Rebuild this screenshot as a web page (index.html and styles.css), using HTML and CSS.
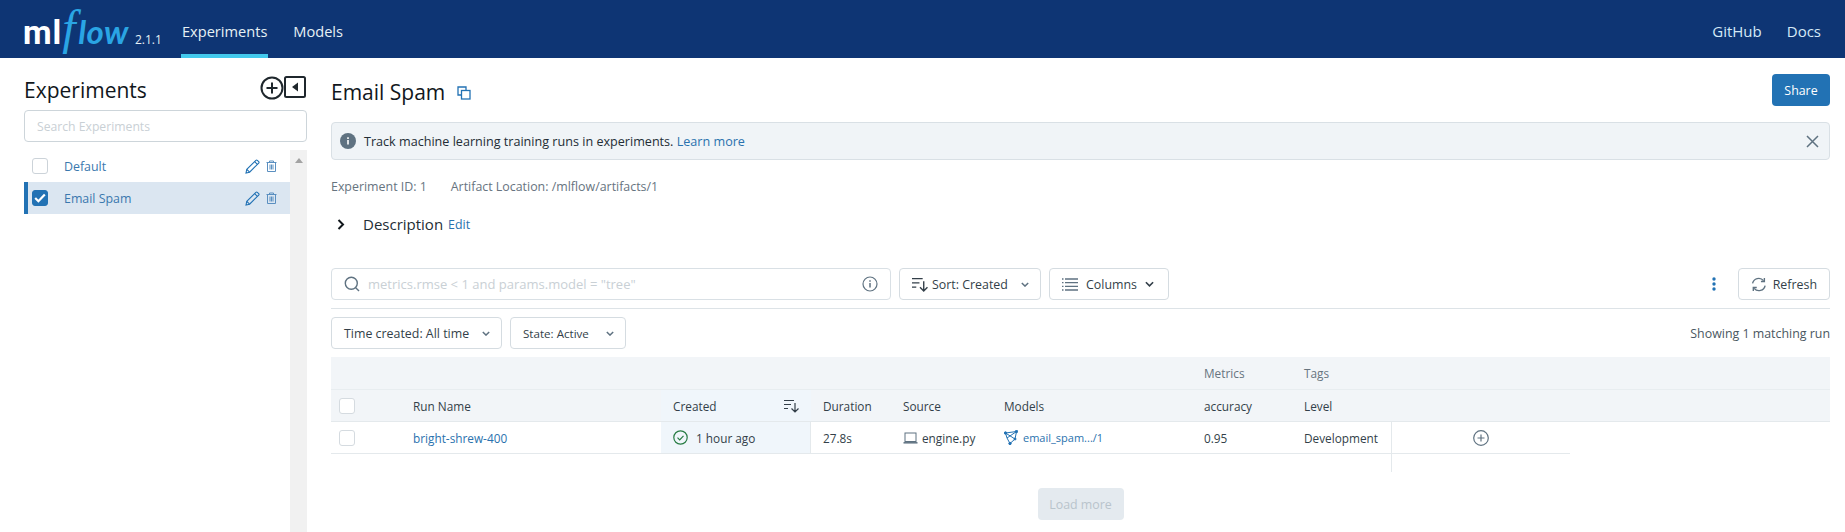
FILE: index.html
```html
<!DOCTYPE html>
<html lang="en">
<head>
<meta charset="utf-8">
<title>MLflow</title>
<link rel="stylesheet" href="styles.css">
</head>
<body>
<header class="topbar">
  <div class="brand"><span class="logo-ml">ml</span><span class="logo-flow"><span class="logo-f">f</span>low</span><span class="version">2.1.1</span></div>
  <nav class="nav">
    <a class="nav-item active">Experiments</a>
    <a class="nav-item">Models</a>
  </nav>
  <nav class="nav-right">
    <a class="nav-link">GitHub</a>
    <a class="nav-link">Docs</a>
  </nav>
</header>
<div class="page">
  <aside class="sidebar">
    <div class="side-head">
      <h2 class="side-title">Experiments</h2>
      <div class="side-tools">
        <svg width="24" height="24" viewBox="0 0 24 24" fill="none" stroke="#1f272d" stroke-width="2"><circle cx="12" cy="12" r="10.5"/><path d="M12 6.5v11M6.5 12h11"/></svg>
        <svg width="22" height="22" viewBox="0 0 22 22"><rect x="1" y="1" width="20" height="20" rx="1.5" fill="none" stroke="#1f272d" stroke-width="2"/><path d="M14 6.5v9L8 11z" fill="#1f272d"/></svg>
      </div>
    </div>
    <input class="side-search" placeholder="Search Experiments">
    <div class="side-body">
      <ul class="exp-list">
        <li class="exp-row">
          <span class="check"></span>
          <span class="exp-name">Default</span>
          <svg class="pencil" width="15" height="15" viewBox="0 0 15 15" fill="none" stroke="#2272b4" stroke-width="1.1"><path d="M1 14l.8-3.6L10.9 1.3a1 1 0 0 1 1.4 0l1.4 1.4a1 1 0 0 1 0 1.4L4.6 13.2z"/><path d="M9.6 2.6l2.8 2.8M1.8 10.4l2.8 2.8"/></svg>
          <svg class="trash" width="11" height="12" viewBox="0 0 11 12" fill="none" stroke="#5a8fc0"><path d="M.5 2.5h10M3.5 2.5V1h4v1.5M1.5 2.500v9h8v-9M4 4.500v5M5.500 4.500v5M7 4.500v5"/></svg>
        </li>
        <li class="exp-row selected">
          <span class="check checked"><svg width="12" height="10" viewBox="0 0 12 10" fill="none" stroke="#fff" stroke-width="2.2"><path d="M1.2 5l3.200 3.200 6.400-6.800"/></svg></span>
          <span class="exp-name">Email Spam</span>
          <svg class="pencil" width="15" height="15" viewBox="0 0 15 15" fill="none" stroke="#2272b4" stroke-width="1.1"><path d="M1 14l.8-3.6L10.9 1.3a1 1 0 0 1 1.4 0l1.4 1.4a1 1 0 0 1 0 1.4L4.6 13.2z"/><path d="M9.6 2.6l2.8 2.8M1.8 10.4l2.8 2.8"/></svg>
          <svg class="trash" width="11" height="12" viewBox="0 0 11 12" fill="none" stroke="#5a8fc0"><path d="M.5 2.5h10M3.5 2.5V1h4v1.5M1.5 2.500v9h8v-9M4 4.500v5M5.500 4.500v5M7 4.500v5"/></svg>
        </li>
      </ul>
      <div class="scrollbar"><span class="scroll-up"></span></div>
    </div>
  </aside>
  <main class="main">
    <div class="title-row">
      <h1 class="title">Email Spam</h1>
      <svg class="copy" width="14" height="14" viewBox="0 0 14 14" fill="none" stroke="#2272b4" stroke-width="1.3"><path d="M1 4V1h8v3M1 1v8h3"/><rect x="4.5" y="4.500" width="8.500" height="8.500"/></svg>
      <button class="share">Share</button>
    </div>
    <div class="alert">
      <svg width="16" height="16" viewBox="0 0 16 16"><circle cx="8" cy="8" r="8" fill="#5f7281"/><path d="M7.200 7h1.600v4.500H7.200zM7.200 4.300h1.600v1.600H7.200z" fill="#fff"/></svg>
      <span class="alert-text">Track machine learning training runs in experiments. <a class="link">Learn more</a></span>
      <svg class="alert-close" width="13" height="13" viewBox="0 0 13 13" stroke="#5f7281" stroke-width="1.5"><path d="M1 1l11 11M12 1L1 12"/></svg>
    </div>
    <div class="meta"><span>Experiment ID: 1</span><span>Artifact Location: /mlflow/artifacts/1</span></div>
    <div class="desc">
      <svg width="8" height="11" viewBox="0 0 8 11" fill="none" stroke="#11171c" stroke-width="2"><path d="M1.500 1l4.500 4.500L1.500 10"/></svg>
      <span class="desc-label">Description</span><a class="link desc-edit">Edit</a>
    </div>
    <div class="toolbar">
      <div class="search">
        <svg width="16" height="16" viewBox="0 0 16 16" fill="none" stroke="#5f7281" stroke-width="1.4"><circle cx="7.300" cy="7.300" r="6"/><path d="M11.700 11.700L15 15"/></svg>
        <span class="search-ph">metrics.rmse &lt; 1 and params.model = "tree"</span>
        <svg width="16" height="16" viewBox="0 0 16 16" fill="none" stroke="#5f7281" stroke-width="1.2"><circle cx="8" cy="8" r="7"/><path d="M8 7v4.500M8 4.300v1.500" stroke-width="1.5"/></svg>
      </div>
      <button class="btn sort">
        <svg width="16" height="15" viewBox="0 0 15 14" fill="none" stroke="#333f49" stroke-width="1.3"><path d="M0 1.500h10M0 5.500h7M0 9.500h4M11 4v9M7.500 9.500L11 13l3.500-3.500"/></svg>
        <span>Sort: Created</span>
        <svg class="chev" width="8" height="5" viewBox="0 0 10 6" fill="none" stroke="#5f7281" stroke-width="1.8"><path d="M1 1l4 4 4-4"/></svg>
      </button>
      <button class="btn columns">
        <svg width="16" height="13" viewBox="0 0 16 13" fill="none" stroke="#5f7281" stroke-width="1.3"><path d="M3 1h13M3 4.700h13M3 8.300h13M3 12h13M0 1h1.500M0 4.700h1.500M0 8.300h1.500M0 12h1.500"/></svg>
        <span>Columns</span>
        <svg width="9" height="6" viewBox="0 0 10 6" fill="none" stroke="#333f49" stroke-width="1.8"><path d="M1 1l4 4 4-4"/></svg>
      </button>
      <span class="spacer"></span>
      <svg class="dots" width="4" height="14" viewBox="0 0 4 14" fill="#2272b4"><circle cx="2" cy="2" r="1.700"/><circle cx="2" cy="7" r="1.700"/><circle cx="2" cy="12" r="1.700"/></svg>
      <button class="btn refresh">
        <svg width="16" height="15" viewBox="0 0 15 14" fill="none" stroke="#5f7281" stroke-width="1.3"><path d="M1.500 6A6 6 0 0 1 12 3.300M13.500 8A6 6 0 0 1 3 10.700"/><path d="M12.800.8v3.300H9.500M2.200 13.200V9.900h3.300"/></svg>
        <span>Refresh</span>
      </button>
    </div>
    <div class="filters">
      <button class="btn time"><span>Time created: All time</span><svg class="chev" width="8" height="5" viewBox="0 0 10 6" fill="none" stroke="#5f7281" stroke-width="1.8"><path d="M1 1l4 4 4-4"/></svg></button>
      <button class="btn state"><span>State: Active</span><svg class="chev" width="8" height="5" viewBox="0 0 10 6" fill="none" stroke="#5f7281" stroke-width="1.8"><path d="M1 1l4 4 4-4"/></svg></button>
      <span class="spacer"></span>
      <span class="count">Showing 1 matching run</span>
    </div>
    <div class="table">
      <div class="cell head group"></div><div class="cell head group"></div><div class="cell head group"></div><div class="cell head group"></div><div class="cell head group"></div><div class="cell head group"></div>
      <div class="cell head group muted">Metrics</div><div class="cell head group muted">Tags</div><div class="cell head group"></div><div class="cell head group"></div>

      <div class="cell head col cell-check"><span class="check dim"></span></div>
      <div class="cell head col">Run Name</div>
      <div class="cell head col created">Created<svg class="created-sort" width="15" height="14" viewBox="0 0 15 14" fill="none" stroke="#333f49" stroke-width="1.2"><path d="M0 1.500h10M0 5.500h7M0 9.500h4M11 4v9M7.500 9.500L11 13l3.500-3.500"/></svg></div>
      <div class="cell head col">Duration</div>
      <div class="cell head col">Source</div>
      <div class="cell head col">Models</div>
      <div class="cell head col">accuracy</div>
      <div class="cell head col">Level</div>
      <div class="cell head col"></div>
      <div class="cell head col"></div>

      <div class="cell row cell-check"><span class="check dim"></span></div>
      <div class="cell row"><a class="link">bright-shrew-400</a></div>
      <div class="cell row created created-row">
        <svg width="15" height="15" viewBox="0 0 15 15" fill="none" stroke="#277c43" stroke-width="1.2"><circle cx="7.500" cy="7.500" r="6.700"/><path d="M4.500 7.700l2.200 2.200 3.800-4"/></svg>
        <span>1 hour ago</span>
      </div>
      <div class="cell row">27.8s</div>
      <div class="cell row source"><svg width="15" height="12" viewBox="0 0 14 12" fill="none" stroke="#5f7281"><rect x="1.500" y="1" width="11" height="8.500"/><path d="M0 10.800h14" stroke-width="1.5"/></svg>engine.py</div>
      <div class="cell row model"><svg width="14" height="15" viewBox="0 0 14 15" fill="none" stroke="#2272b4"><path d="M1.500 3L12.500 1.500 11 9 6 13.500 3 8zM1.500 3L11 9M12.500 1.500L3 8"/><circle cx="1.500" cy="3" r="1.200" fill="#2272b4"/><circle cx="12.500" cy="1.500" r="1.200" fill="#2272b4"/><circle cx="6" cy="13.500" r="1.200" fill="#2272b4"/><circle cx="11" cy="9" r="1" fill="#2272b4"/></svg><a class="link model-link">email_spam.../1</a></div>
      <div class="cell row">0.95</div>
      <div class="cell row">Development</div>
      <div class="cell row plus-cell"><svg width="16" height="16" viewBox="0 0 16 16" fill="none" stroke="#5f7281" stroke-width="1.2"><circle cx="8" cy="8" r="7.300"/><path d="M8 4.500v7M4.500 8h7"/></svg></div>
      <div class="cell"></div>
      <div class="tail"></div>
    </div>
    <div class="load-wrap"><button class="load">Load more</button></div>
  </main>
</div>
</body>
</html>
```
FILE: styles.css
```css
* { box-sizing: border-box; }
html, body { margin: 0; height: 532px; overflow: hidden; }
body { font-family: "Open Sans", "Noto Sans", sans-serif; font-size: 12.4px; color: #11171c; background: #fff; }
h1, h2, ul { margin: 0; padding: 0; }
ul { list-style: none; }
a { text-decoration: none; }
button { font-family: inherit; font-size: 12.4px; }
.topbar { height: 58px; background: #0e3574; display: flex; color: #fff; padding: 0 24px; }
.brand { width: 157px; height: 58px; flex: none; display: flex; align-items: baseline; padding-top: 3px; }
.logo-ml { font-family: "Roboto", sans-serif; font-weight: 700; font-size: 33px; line-height: 50px; letter-spacing: 1px; margin-left: -1px; }
.logo-flow { font-family: "Lato", sans-serif; font-style: italic; font-weight: 700; font-size: 33px; line-height: 50px; color: #2aa5e4; letter-spacing: .5px; }
.logo-f { font-family: "Liberation Serif", serif; font-size: 48px; line-height: 50px; font-weight: 400; margin-right: 2px; }
.version { font-size: 12px; margin-left: 6px; color: #e6f1f5; }
.nav { display: flex; gap: 24px; }
.nav-item { height: 58px; line-height: 63px; font-size: 14.6px; color: #e6f1f5; padding: 0 1px; }
.nav-item.active { border-bottom: 4px solid #43c9ed; }
.nav-right { margin-left: auto; display: flex; gap: 25px; }
.nav-link { line-height: 63px; font-size: 15px; color: #d5e9f7; }
.page { display: flex; height: 474px; }
.sidebar { width: 307px; padding-left: 24px; flex: none; display: flex; flex-direction: column; }
.side-head { height: 52px; display: flex; justify-content: space-between; padding-top: 18px; }
.side-title { font-size: 21px; line-height: 28px; font-weight: 400; color: #11171c; }
.side-tools { display: flex; align-items: flex-start; padding-right: 1px; }
.side-search { height: 32px; width: 283px; border: 1px solid #cdd5da; border-radius: 4px; padding: 0 12px; font: 12.2px "Open Sans", sans-serif; outline: 0; flex: none; }
.side-search::placeholder { color: #c9d0d5; opacity: 1; }
.side-body { display: flex; margin-top: 8px; flex: 1; }
.exp-list { width: 266px; flex: none; }
.exp-row { height: 32px; display: flex; align-items: center; padding-left: 8px; }
.exp-row.selected { background: #dbe6f1; border-left: 4px solid #2272b4; padding-left: 4px; }
.check { width: 16px; height: 16px; border: 1px solid #ccd3d9; border-radius: 3px; flex: none; background: #fff; display: inline-flex; align-items: center; justify-content: center; }
.check.checked { background: #2272b4; border-color: #2272b4; }
.check.dim { border-color: #d5dbe0; }
.exp-name { margin-left: 16px; width: 181px; color: #3a78ae; flex: none; }
.trash { margin-left: 6px; }
.scrollbar { flex: 1; background: #f1f1f1; }
.scroll-up { display: block; margin: 8px auto 0; width: 0; border: 4px solid transparent; border-top: 0; border-bottom: 5px solid #a3a3a3; }
.main { flex: 1; padding: 0 15px 0 24px; min-width: 0; }
.title-row { height: 64px; display: flex; align-items: flex-start; padding-top: 16px; }
.title { font-size: 21px; line-height: 36px; font-weight: 400; }
.copy { margin: 12px 0 0 12px; }
.share { margin-left: auto; width: 58px; height: 32px; background: #2272b4; color: #fff; border: 0; border-radius: 4px; }
.alert { height: 38px; background: #f0f4f7; border: 1px solid #d9e0e5; border-radius: 4px; display: flex; align-items: center; padding: 0 10px 0 8px; font-size: 12.6px; }
.alert-text { margin-left: 8px; color: #232d35; }
.alert-close { margin-left: auto; }
.link { color: #2a72ae; }
.meta { height: 52px; display: flex; gap: 24px; align-items: center; color: #67747f; }
.desc { height: 24px; display: flex; align-items: center; padding-left: 6px; }
.desc-label { font-size: 15px; margin-left: 18px; color: #232d35; }
.desc-edit { margin-left: 5px; }
.toolbar { margin-top: 32px; height: 41px; padding-bottom: 8px; border-bottom: 1px solid #dde3e7; display: flex; gap: 8px; align-items: center; }
.search { width: 560px; height: 32px; border: 1px solid #d9e0e5; border-radius: 4px; display: flex; align-items: center; padding: 0 12px; gap: 8px; }
.search-ph { flex: 1; color: #c9d0d5; font-size: 13px; }
.btn { height: 32px; background: #fff; border: 1px solid #d5dce1; border-radius: 4px; display: inline-flex; align-items: center; gap: 4px; color: #333f49; padding: 0 12px; white-space: nowrap; }
.chev { margin-left: auto; margin-right: -1px; }
.sort { width: 142px; }
.columns { width: 120px; gap: 8px; }
.spacer { flex: 1; }
.dots { margin-right: 14px; }
.refresh { width: 92px; justify-content: center; gap: 6px; }
.filters { height: 48px; display: flex; gap: 8px; align-items: center; }
.time { width: 171px; }
.state { width: 116px; font-size: 11.6px; }
.count { color: #4a5761; }
.table { display: grid; grid-template-columns: 70px 260px 150px 80px 101px 200px 100px 99px 179px 1fr; font-size: 11.8px; }
.cell { height: 32px; display: flex; align-items: center; padding-left: 12px; color: #333f49; white-space: nowrap; }
.cell-check { padding-left: 8px; }
.head { background: #f2f5f8; }
.group { border-bottom: 1px solid #e8edf0; height: 33px; }
.muted { color: #67747f; }
.col { border-bottom: 1px solid #e4e9ec; padding-top: 1px; }
.created { background: #f0f6fb; }
.created-sort { margin-left: auto; margin-right: 12px; }
.row { border-bottom: 1px solid #e4e9ec; }
.created-row { gap: 8px; border-right: 1px solid #e4e9ec; }
.source svg { margin-right: 4px; }
.model svg { margin-right: 5px; }
.model-link { font-size: 11px; }
.plus-cell { justify-content: center; padding: 0; border-left: 1px solid #e4e9ec; }
.tail { grid-column: 9 / 10; height: 18px; border-left: 1px solid #e4e9ec; }
.load-wrap { display: flex; justify-content: center; margin-top: 16px; }
.load { width: 86px; height: 32px; padding: 0; background: #e4eaef; color: #b9c4cc; border: 0; border-radius: 4px; white-space: nowrap; }
```
